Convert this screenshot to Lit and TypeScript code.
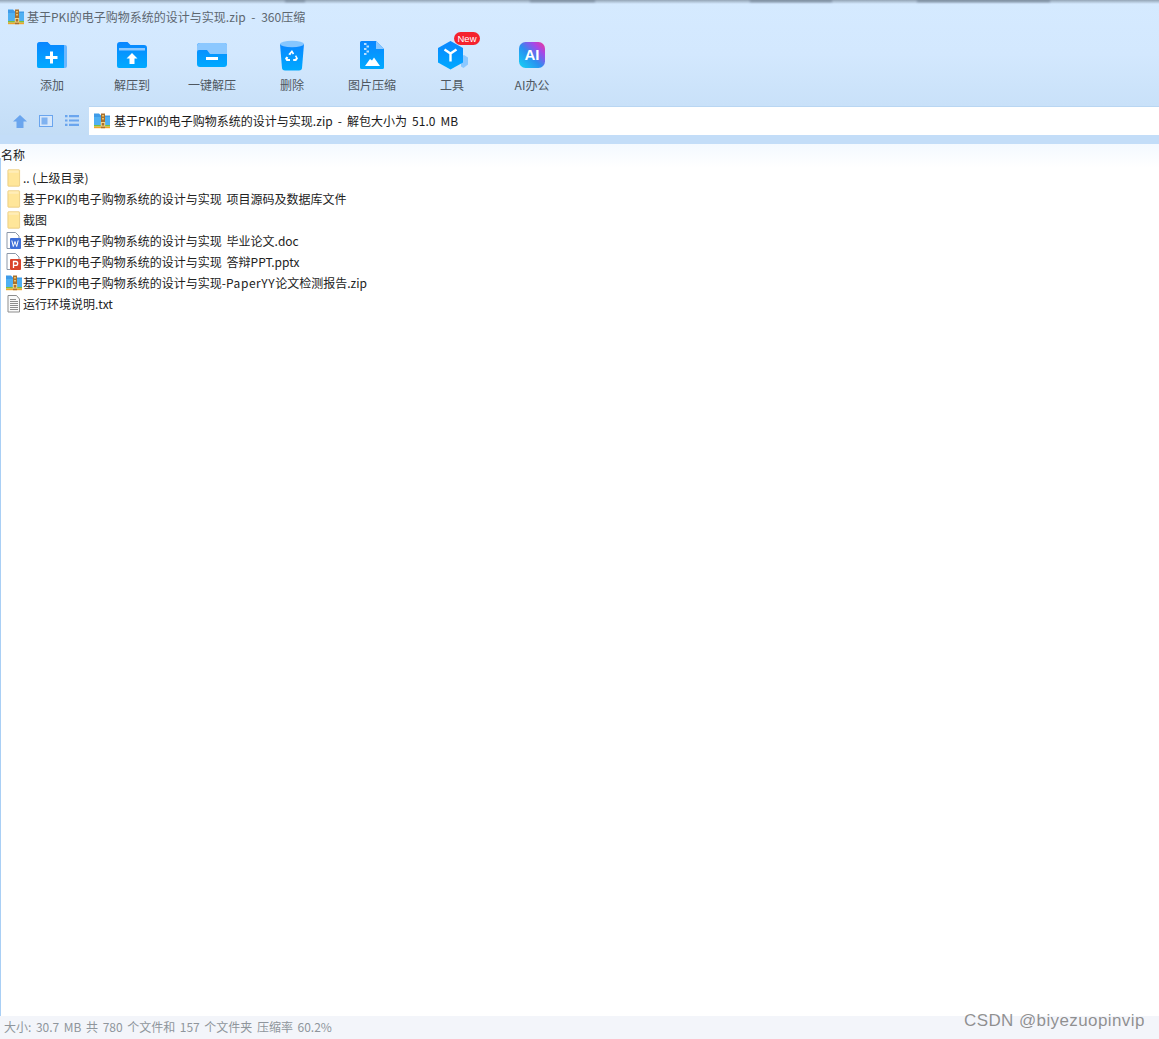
import { LitElement, html, css, svg } from "lit";
import { customElement } from "lit/decorators.js";

const zipIcon = svg`<svg class="ico" width="18" height="18" viewBox="0 0 18 18">
  <path d="M1 1.500h5l2 2h9v10H1z" fill="#3f9be8"/>
  <path d="M1 5h16v8H1z" fill="#4fb0f2"/>
  <rect x="1" y="13" width="16" height="1.600" fill="#7fbf3a"/>
  <rect x="1" y="14.600" width="16" height="1.600" fill="#f0a52a"/>
  <rect x="8" y="1.500" width="4" height="14.700" fill="#a9702c"/>
  <rect x="9" y="3" width="2" height="1.500" fill="#e9c46a"/>
  <rect x="9" y="6" width="2" height="1.500" fill="#e9c46a"/>
  <rect x="8.300" y="10.500" width="3.400" height="3.600" fill="none" stroke="#f4d58a" stroke-width="1"/>
</svg>`;

const folderRow = svg`<svg class="ico" width="18" height="18" viewBox="0 0 18 18">
  <path d="M3.500 .8h10.500a.6.6 0 0 1 .6.6v15.200a.6.6 0 0 1-.6.6H3.500a.6.6 0 0 1-.6-.6V1.400a.6.6 0 0 1 .6-.6z" fill="#ffe69a" stroke="#e8c877" stroke-width=".8"/>
  <path d="M3.600 1.400h10v2.400h-10z" fill="#ffedb8"/>
</svg>`;

const wordRow = svg`<svg class="ico" width="18" height="18" viewBox="0 0 18 18">
  <path d="M2 1h8.500l3.500 3v12H2z" fill="#fff"/>
  <path d="M2 .5h8.500l3.500 3.500v2M2 .5v16h3" fill="none" stroke="#8b97a8"/>
  <rect x="5" y="6" width="11" height="11" rx="1" fill="#3f6fd8"/>
  <path d="M6.800 8.500l1.500 6 1.700-5 1.700 5 1.500-6" fill="none" stroke="#fff" stroke-width="1"/>
</svg>`;

const pptRow = svg`<svg class="ico" width="18" height="18" viewBox="0 0 18 18">
  <path d="M2 1h8.500l3.500 3v13H2z" fill="#fff"/>
  <path d="M2 .5h8.500l3.500 3.500v2M2 .5v16h3" fill="none" stroke="#8b97a8"/>
  <rect x="5" y="6" width="11" height="11" rx="1" fill="#d9432b"/>
  <path d="M8.500 15V8.500h2.300a1.900 1.900 0 0 1 0 3.800H8.500" fill="none" stroke="#fff" stroke-width="1.300"/>
</svg>`;

const txtRow = svg`<svg class="ico" width="18" height="18" viewBox="0 0 18 18">
  <path d="M3 .5h8.500l3 3.500v13H3z" fill="#fafafa" stroke="#8d8d8d"/>
  <path d="M5 4.500h6M5 6.500h8M5 8.500h8M5 10.500h8M5 12.500h8M5 14.500h8" stroke="#8d8d8d" stroke-width="1"/>
</svg>`;

const grad = (id: string) => svg`<defs><linearGradient id=${id} x1="0" y1="0" x2="0" y2="1"><stop offset="0" stop-color="#0a86ff"/><stop offset="1" stop-color="#00aaff"/></linearGradient></defs>`;

const addIcon = svg`<svg width="32" height="28" viewBox="0 0 32 28">${grad("ga")}
  <path d="M1 4a3 3 0 0 1 3-3h7.500l3 3H29a2 2 0 0 1 2 2v19a2 2 0 0 1-2 2H3a2 2 0 0 1-2-2z" fill="#6cb8ff"/>
  <path d="M1 4a3 3 0 0 1 3-3h7.500l3 3H28v23H3a2 2 0 0 1-2-2z" fill="url(#ga)"/>
  <path d="M14 10.500h3V15h4.500v3H17v4.500h-3V18H9.500v-3H14z" fill="#fff"/>
</svg>`;

const extractIcon = svg`<svg width="32" height="28" viewBox="0 0 32 28">${grad("gb")}
  <path d="M1 4a3 3 0 0 1 3-3h7.500l3 3H28a3 3 0 0 1 3 3v18a2 2 0 0 1-2 2H3a2 2 0 0 1-2-2z" fill="url(#gb)"/>
  <path d="M3 7h26v2.500H3z" fill="#8cc8ff"/>
  <path d="M16 12l5.500 5.500H18.500V23h-5v-5.500h-3z" fill="#fff"/>
</svg>`;

const oneKeyIcon = svg`<svg width="32" height="26" viewBox="0 0 32 26">${grad("gc")}
  <rect x="1" y="1" width="30" height="24" rx="3" fill="url(#gc)"/>
  <path d="M1 4a3 3 0 0 1 3-3h25a2 2 0 0 1 2 2v9H14l-3-4H3a2 2 0 0 0-2 2z" fill="#8cc8ff"/>
  <rect x="10" y="15" width="12" height="3" fill="#fff"/>
</svg>`;

const trashIcon = svg`<svg width="26" height="31" viewBox="0 0 26 31">${grad("gd")}
  <path d="M1 4l2 24c.2 1.500 1 2.500 3 2.500h14c2 0 2.800-1 3-2.500l2-24z" fill="url(#gd)"/>
  <ellipse cx="13" cy="4" rx="12" ry="3.200" fill="#86c6ff"/>
  <path d="M13 10l2.200 3.500-1.500 1-1-1.700-1.400 2.400-2-1zM17 15l2 3.400-1.800 2.600h-3v-2h2l1-1.500-1.300-.6zM7.500 16.500l1.800 1-.8 1.500h2.500v2H7.500l-1.500-2.500z" fill="#fff"/>
</svg>`;

const imageIcon = svg`<svg width="24" height="28" viewBox="0 0 24 28">${grad("ge")}
  <path d="M0 1.500A1.500 1.500 0 0 1 1.500 0H16l8 8v18.500a1.500 1.500 0 0 1-1.500 1.500h-21A1.500 1.500 0 0 1 0 26.500z" fill="url(#ge)"/>
  <path d="M16 0l8 8h-8z" fill="#8cc8ff"/>
  <path d="M4 2h2.500v2H4zM6.500 4.500H9v2H6.500zM4 7h2.500v2H4zM6.500 9.500H9v2H6.500zM4 12h2.500v2H4z" fill="#b8deff"/>
  <path d="M5 25l5-7 2 1.500 2-3 6 8.500z" fill="#fff"/>
</svg>`;

const toolIcon = svg`<svg width="32" height="29" viewBox="-2 0 32 29">${grad("gf")}
  <path d="M23 15.500l3-1.500 4 2.500v7l-4.500 3.500-2.500-1.500z" fill="#8cc8ff"/>
  <path d="M12.500 0l12.500 7v14.500L12.500 28.500 0 21.500V7z" fill="url(#gf)"/>
  <path d="M6.500 8.500l6 4 6-4M12.500 12.500v8" fill="none" stroke="#fff" stroke-width="2.400"/>
</svg>`;

const aiIcon = svg`<svg width="26" height="26" viewBox="0 0 26 26">
  <defs>
    <linearGradient id="gg" x1="0" y1="1" x2="1" y2="0">
      <stop offset="0" stop-color="#13d6f5"/>
      <stop offset=".45" stop-color="#2a8ff0"/>
      <stop offset=".75" stop-color="#a548e8"/>
      <stop offset="1" stop-color="#f5358e"/>
    </linearGradient>
  </defs>
  <rect width="26" height="26" rx="6.500" fill="url(#gg)"/>
</svg>`;

const tools = [
  { icon: addIcon, label: "添加" },
  { icon: extractIcon, label: "解压到" },
  { icon: oneKeyIcon, label: "一键解压" },
  { icon: trashIcon, label: "删除" },
  { icon: imageIcon, label: "图片压缩" },
  { icon: toolIcon, label: "工具", badge: "New" },
  { icon: aiIcon, label: "AI办公", ai: true },
];

const files = [
  { icon: folderRow, name: html`<span class="tight">.. (上级目录)</span>` },
  { icon: folderRow, name: html`基于PKI的电子购物系统的设计与实现 项目源码及数据库文件` },
  { icon: folderRow, name: html`截图` },
  { icon: wordRow, name: html`基于PKI的电子购物系统的设计与实现 毕业论文.doc` },
  { icon: pptRow, name: html`基于PKI的电子购物系统的设计与实现 答辩PPT.pptx` },
  { icon: zipIcon, name: html`基于PKI的电子购物系统的设计与实现-<span class="wide">PaperYY</span>论文检测报告.zip` },
  { icon: txtRow, name: html`运行环境说明.txt` },
];

@customElement("app-root")
export class AppRoot extends LitElement {
  static styles = css`
    :host {
      display: flex;
      flex-direction: column;
      position: relative;
      width: 1159px;
      height: 1039px;
      overflow: hidden;
      background: #fff;
      font-family: "Noto Sans CJK SC", "Noto Sans", sans-serif;
      font-size: 12px;
      color: #222;
      word-spacing: 2px;
    }
    .shadow {
      position: absolute;
      top: 0;
      height: 3px;
      background: linear-gradient(rgba(70, 85, 105, .65), rgba(70, 85, 105, 0));
      filter: blur(1px);
    }
    .chrome {
      height: 135px;
      flex: none;
      display: flex;
      flex-direction: column;
      background:
        linear-gradient(rgba(120, 135, 150, .7), rgba(120, 135, 150, 0) 4px),
        linear-gradient(#d5eaff 0%, #d3e8fe 40%, #c3ddf6 100%);
    }
    .title {
      height: 23px;
      margin-top: 5px;
      padding-left: 8px;
      display: flex;
      align-items: center;
      gap: 2px;
      color: #5d6770;
      line-height: 18px;
      word-spacing: 3px;
    }
    .title .ico,
    .addr .ico {
      margin-left: -1px;
    }
    .toolbar {
      display: flex;
      padding-left: 12px;
      margin-top: 9px;
      height: 61px;
    }
    .tool {
      position: relative;
      width: 80px;
      display: flex;
      flex-direction: column;
      align-items: center;
      color: #4f5760;
    }
    .tool-ico {
      height: 36px;
      display: flex;
      align-items: center;
      justify-content: center;
    }
    .tool-label {
      margin-top: 3px;
      line-height: 18px;
    }
    .badge {
      position: absolute;
      top: -5px;
      left: 42px;
      height: 13px;
      width: 26px;
      border-radius: 7px;
      background: #f5222d;
      color: #fff;
      font-family: "Liberation Sans", sans-serif;
      font-size: 9.5px;
      line-height: 13px;
      text-align: center;
    }
    .ai {
      position: absolute;
      top: 4px;
      left: 0;
      right: 0;
      text-align: center;
      color: #fff;
      font-family: "Liberation Sans", sans-serif;
      font-weight: 700;
      font-size: 15px;
      line-height: 28px;
    }
    .nav {
      display: flex;
      height: 29px;
      margin-top: auto;
      align-items: center;
    }
    .nav-icons {
      display: flex;
      width: 89px;
      flex: none;
      padding-left: 13px;
      box-sizing: border-box;
      gap: 12px;
      align-items: center;
    }
    .addr {
      flex: 1;
      height: 28px;
      background: #fff;
      border-top: 1px solid #b9d6f2;
      display: flex;
      align-items: center;
      gap: 3px;
      padding-left: 5px;
      color: #1a1a1a;
      line-height: 18px;
      word-spacing: 2.400px;
    }
    .band {
      flex: none;
      height: 9px;
      background: #c3ddf8;
    }
    .head {
      flex: none;
      height: 24px;
      padding-left: 1px;
      background: linear-gradient(#f3f9ff, #ffffff);
      line-height: 22px;
      color: #1a1a1a;
    }
    .list {
      flex: 1;
      border-left: 1px solid #a9cff5;
      margin-top: -10px;
      display: flex;
      flex-direction: column;
    }
    .spacer {
      height: 9px;
      flex: none;
    }
    .row {
      height: 21px;
      display: flex;
      align-items: center;
      padding-left: 4px;
      line-height: 21px;
      color: #222;
      white-space: pre;
    }
    .wide {
      letter-spacing: .55px;
    }
    .tight {
      word-spacing: 0;
    }
    .ico {
      flex: none;
      display: block;
    }
    .status {
      flex: none;
      height: 23px;
      background: #f3f5fa;
      color: #8f959c;
      padding-left: 4px;
      line-height: 22px;
      word-spacing: 1.900px;
    }
    .mark {
      position: absolute;
      left: 964px;
      top: 1010px;
      font-family: "Liberation Sans", sans-serif;
      font-size: 17px;
      letter-spacing: .4px;
      word-spacing: 0;
      line-height: 22px;
      color: rgba(115, 115, 115, .78);
    }
  `;

  render() {
    return html`
      <div class="chrome">
        <div class="title">${zipIcon}<span>基于PKI的电子购物系统的设计与实现.zip - 360压缩</span></div>
        <div class="toolbar">
          ${tools.map(
            (t) => html`<div class="tool">
              <div class="tool-ico">${t.icon}</div>
              ${t.ai ? html`<div class="ai">AI</div>` : ""}
              ${t.badge ? html`<div class="badge">${t.badge}</div>` : ""}
              <div class="tool-label">${t.label}</div>
            </div>`
          )}
        </div>
        <div class="nav">
          <div class="nav-icons">
            <svg width="14" height="14" viewBox="0 0 14 14"><path d="M7 1L14 7.500H10.500V14h-7V7.500H0z" fill="#6aa5ee"/></svg>
            <svg width="14" height="12" viewBox="0 0 14 12"><rect x=".5" y=".5" width="13" height="11" fill="#d6e7fb" stroke="#6aa5ee"/><rect x="2.500" y="2.500" width="6" height="7" fill="#7fb2f0"/></svg>
            <svg width="14" height="11" viewBox="0 0 14 11"><path d="M0 0h2.500v2.200H0zM4 0h10v2.200H4zM0 4.400h2.500v2.200H0zM4 4.400h10v2.200H4zM0 8.800h2.500V11H0zM4 8.800h10V11H4z" fill="#6aa5ee"/></svg>
          </div>
          <div class="addr">${zipIcon}<span>基于PKI的电子购物系统的设计与实现.zip - 解包大小为 51.0 MB</span></div>
        </div>
      </div>
      <div class="band"></div>
      <div class="head">名称</div>
      <div class="list">
        <div class="spacer"></div>
        ${files.map((f) => html`<div class="row">${f.icon}<span>${f.name}</span></div>`)}
      </div>
      <div class="status">大小: 30.7 MB 共 780 个文件和 157 个文件夹 压缩率 60.2%</div>
      <div class="mark">CSDN @biyezuopinvip</div>
      ${[
        [285, 20],
        [530, 65],
        [750, 82],
        [917, 133],
      ].map((s) => html`<div class="shadow" style="left:${s[0]}px;width:${s[1]}px"></div>`)}
    `;
  }
}
